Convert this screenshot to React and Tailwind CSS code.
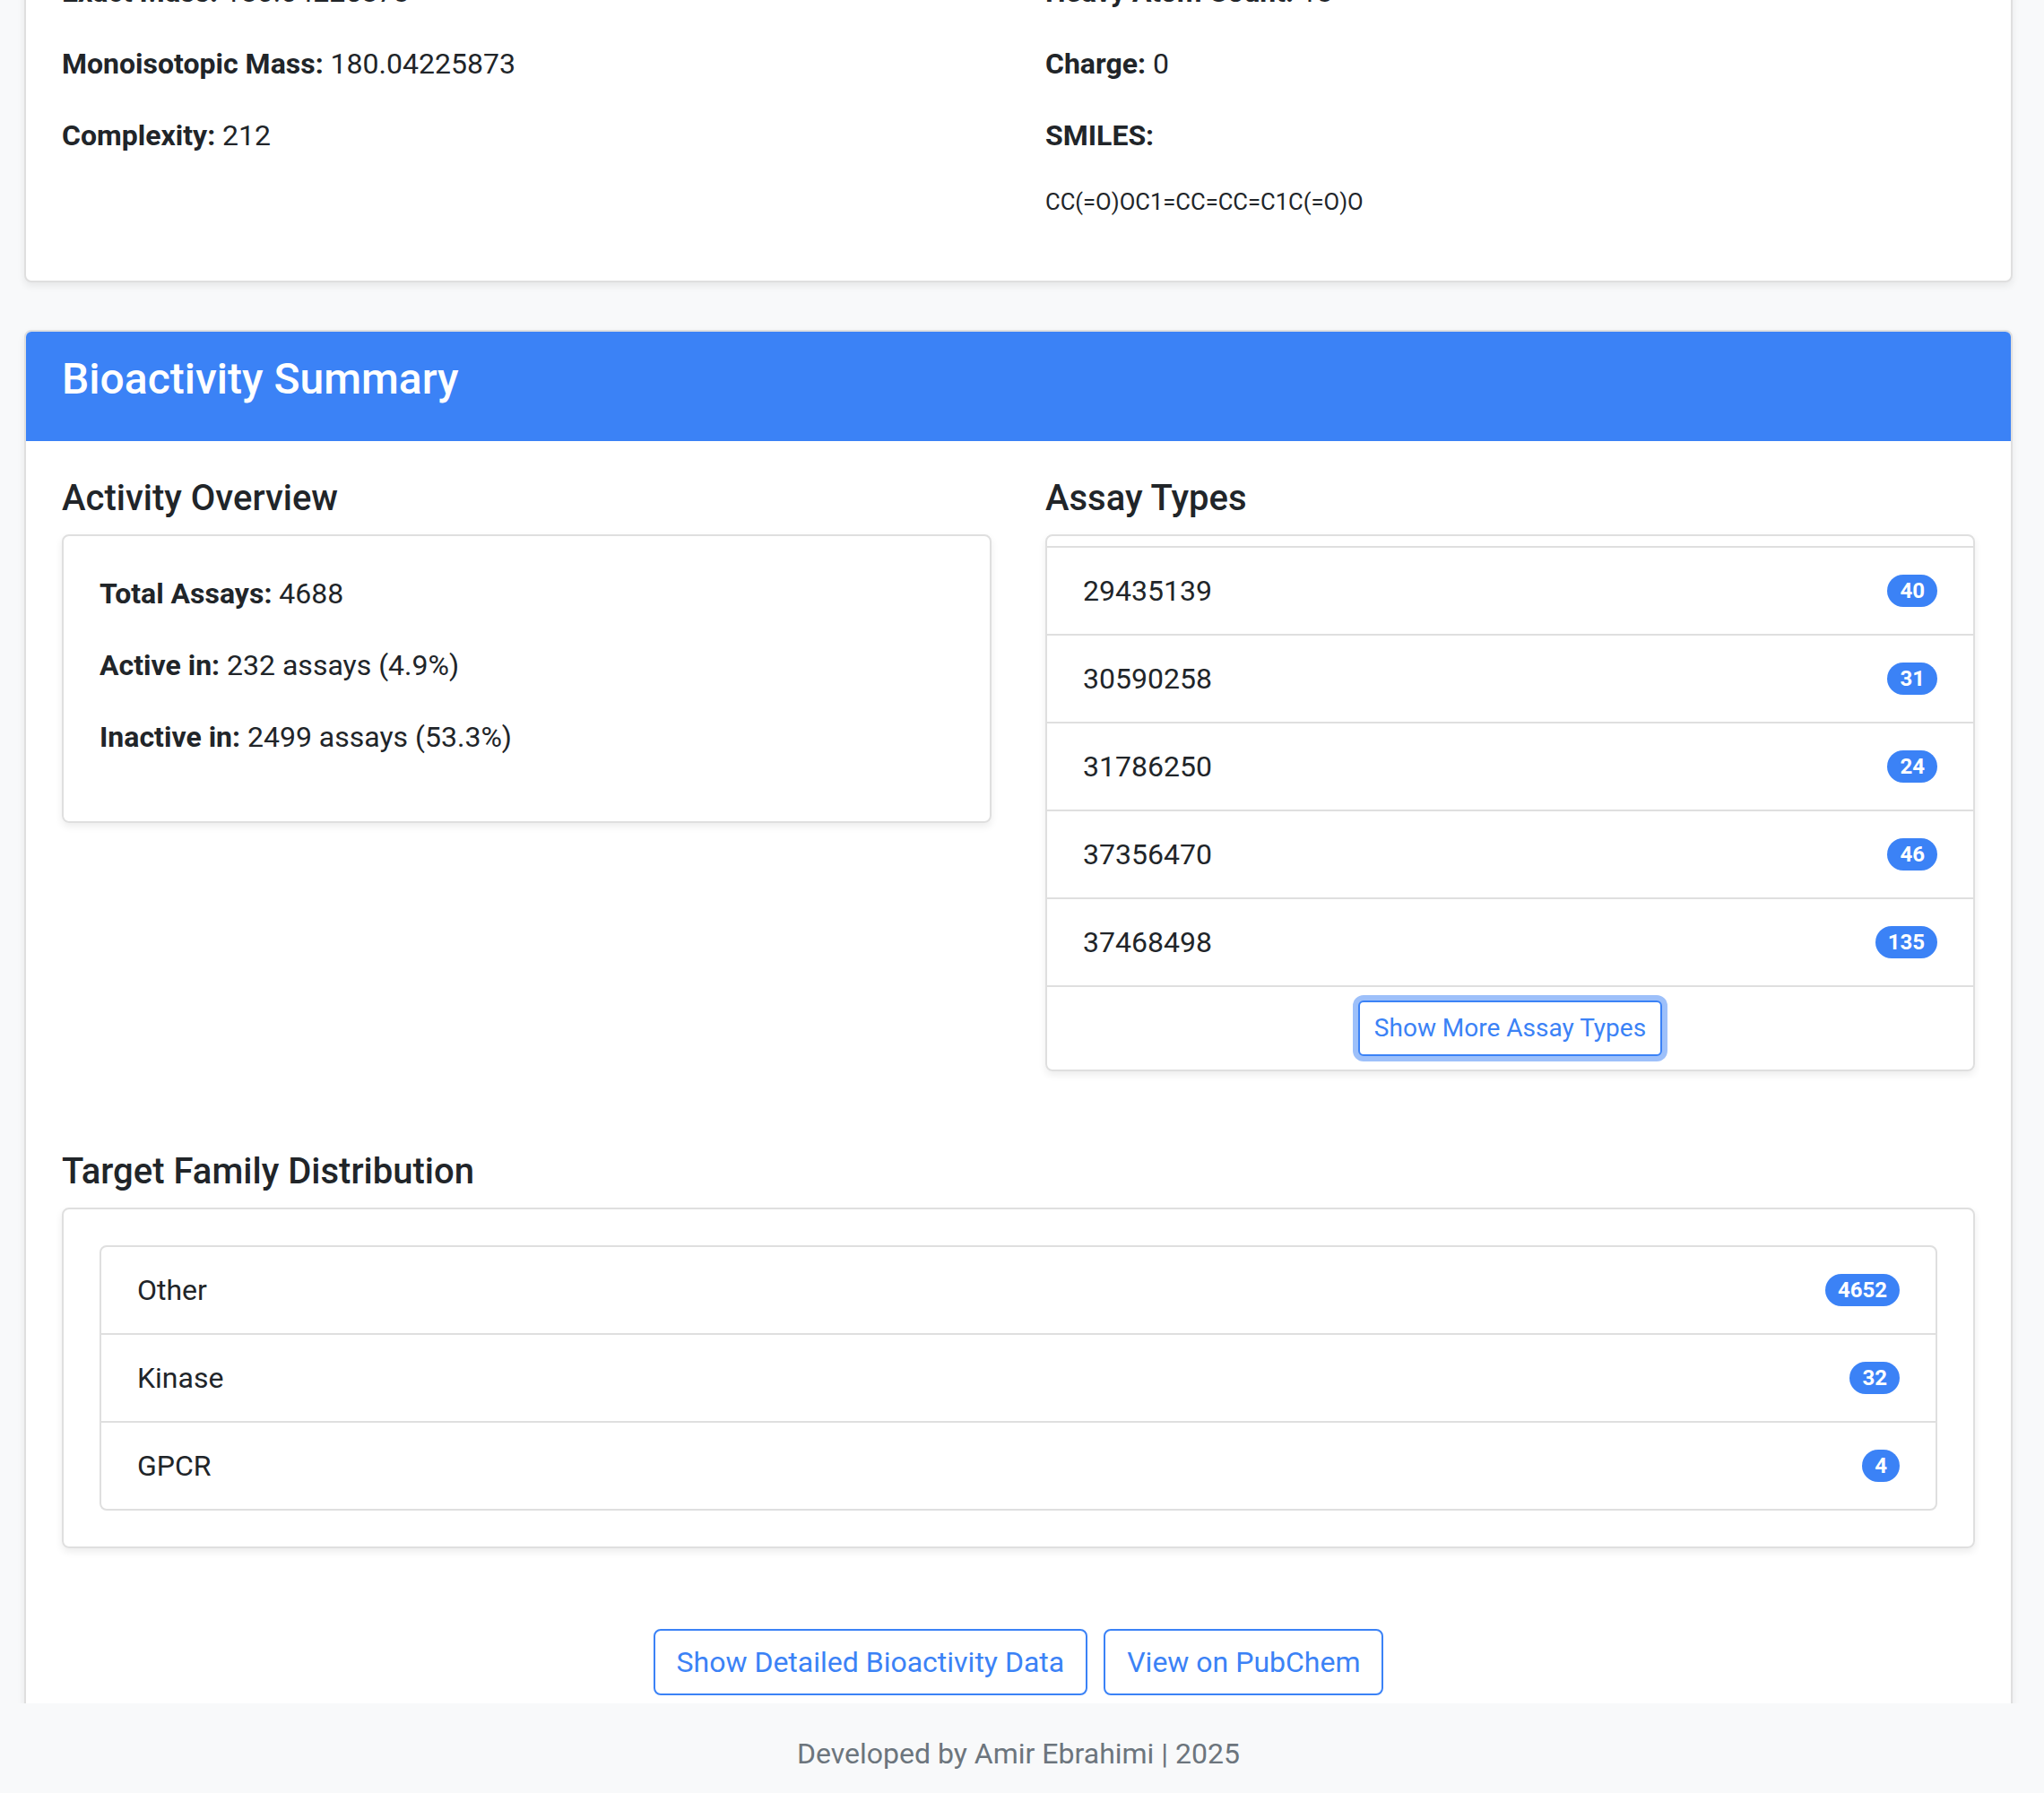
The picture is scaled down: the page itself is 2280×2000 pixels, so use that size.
import React from 'react';

const ASSAYS = [
  ['29435139', 40],
  ['30590258', 31],
  ['31786250', 24],
  ['37356470', 46],
  ['37468498', 135],
];

const FAMILIES = [
  ['Other', 4652],
  ['Kinase', 32],
  ['GPCR', 4],
];

function Badge({ children }) {
  return (
    <span className="inline-block rounded-full bg-[#3b82f6] px-[14px] py-[6px] text-[24px] font-bold leading-[24px] text-white">
      {children}
    </span>
  );
}

function Field({ label, value }) {
  return (
    <p className="mb-[32px] leading-[48px]">
      <span className="font-bold">{label}:</span> {value}
    </p>
  );
}

function SectionTitle({ children }) {
  return <h5 className="mb-[16px] text-[40px] font-medium leading-[48px]">{children}</h5>;
}

export default function App() {
  return (
    <div className="flex h-[2000px] flex-col overflow-hidden bg-[#f8f9fa] font-['Roboto',sans-serif] text-[32px] text-[#212529]">
      {/* Scrolled page area */}
      <div className="h-[1900px] shrink-0 overflow-hidden">
        <div className="-mt-[75px] ml-[27px] mr-[35px]">
          {/* Compound properties card (top is scrolled out of view) */}
          <div className="rounded-[8px] border-2 border-[#dfdfdf] bg-white p-[40px] shadow-[0_4px_8px_rgba(0,0,0,0.075)]">
            <div className="grid grid-cols-2 gap-x-[60px]">
              <div>
                <Field label="Exact Mass" value="180.04225873" />
                <Field label="Monoisotopic Mass" value="180.04225873" />
                <Field label="Complexity" value="212" />
              </div>
              <div>
                <Field label="Heavy Atom Count" value="13" />
                <Field label="Charge" value="0" />
                <p className="mb-[32px] font-bold leading-[48px]">SMILES:</p>
                <p className="mb-[30px] text-[25.6px] leading-[36px]">CC(=O)OC1=CC=CC=C1C(=O)O</p>
              </div>
            </div>
          </div>

          {/* Bioactivity summary card */}
          <div className="mt-[53px] overflow-hidden rounded-[8px] border-2 border-[#dfdfdf] bg-white shadow-[0_4px_8px_rgba(0,0,0,0.075)]">
            <div className="bg-[#3b82f6] px-[40px] pb-[24px] pt-[24px]">
              <h4 className="mb-[16px] text-[48px] font-medium leading-[58px] text-white">Bioactivity Summary</h4>
            </div>

            <div className="px-[40px] pb-[40px] pt-[40px]">
              <div className="grid grid-cols-2 items-start gap-x-[60px]">
                {/* Activity overview */}
                <div>
                  <SectionTitle>Activity Overview</SectionTitle>
                  <div className="rounded-[8px] border-2 border-[#dfdfdf] px-[40px] pb-[38px] pt-[40px] shadow-[0_4px_8px_rgba(0,0,0,0.075)]">
                    <Field label="Total Assays" value="4688" />
                    <Field label="Active in" value="232 assays (4.9%)" />
                    <Field label="Inactive in" value="2499 assays (53.3%)" />
                  </div>
                </div>

                {/* Assay types */}
                <div>
                  <SectionTitle>Assay Types</SectionTitle>
                  <div className="overflow-hidden rounded-[8px] border-2 border-[#dfdfdf] shadow-[0_4px_8px_rgba(0,0,0,0.075)]">
                    <div className="h-[11px]" />
                    {ASSAYS.map(([id, count]) => (
                      <div
                        key={id}
                        className="flex items-center justify-between border-t-2 border-[#dfdfdf] px-[40px] py-[24px] leading-[48px]"
                      >
                        <span>{id}</span>
                        <Badge>{count}</Badge>
                      </div>
                    ))}
                    <div className="flex justify-center border-t-2 border-[#dfdfdf] py-[15px]">
                      <button className="rounded-[6px] border-2 border-[#3b82f6] bg-white px-[16px] py-[8px] text-[28px] leading-[42px] text-[#3b82f6] shadow-[0_0_0_6px_rgba(59,130,246,0.5)]">
                        Show More Assay Types
                      </button>
                    </div>
                  </div>
                </div>
              </div>

              {/* Target family distribution */}
              <div className="mt-[88px]">
                <SectionTitle>Target Family Distribution</SectionTitle>
                <div className="rounded-[8px] border-2 border-[#dfdfdf] p-[40px] shadow-[0_4px_8px_rgba(0,0,0,0.075)]">
                  <div className="overflow-hidden rounded-[8px] border-2 border-[#dfdfdf]">
                    {FAMILIES.map(([name, count], i) => (
                      <div
                        key={name}
                        className={`flex items-center justify-between px-[40px] py-[24px] leading-[48px] ${i > 0 ? 'border-t-2 border-[#dfdfdf]' : ''}`}
                      >
                        <span>{name}</span>
                        <Badge>{count}</Badge>
                      </div>
                    ))}
                  </div>
                </div>
              </div>

              <div className="mt-[90px] flex justify-center gap-[18px]">
                <button className="rounded-[8px] border-2 border-[#3b82f6] bg-white px-[24px] py-[11px] leading-[48px] text-[#3b82f6]">
                  Show Detailed Bioactivity Data
                </button>
                <button className="rounded-[8px] border-2 border-[#3b82f6] bg-white px-[24px] py-[11px] leading-[48px] text-[#3b82f6]">
                  View on PubChem
                </button>
              </div>
            </div>
          </div>
        </div>
      </div>

      {/* Footer */}
      <footer className="ml-[27px] mr-[35px] py-[32px] text-center leading-[48px] text-[#6c757d]">
        Developed by Amir Ebrahimi | 2025
      </footer>
    </div>
  );
}
